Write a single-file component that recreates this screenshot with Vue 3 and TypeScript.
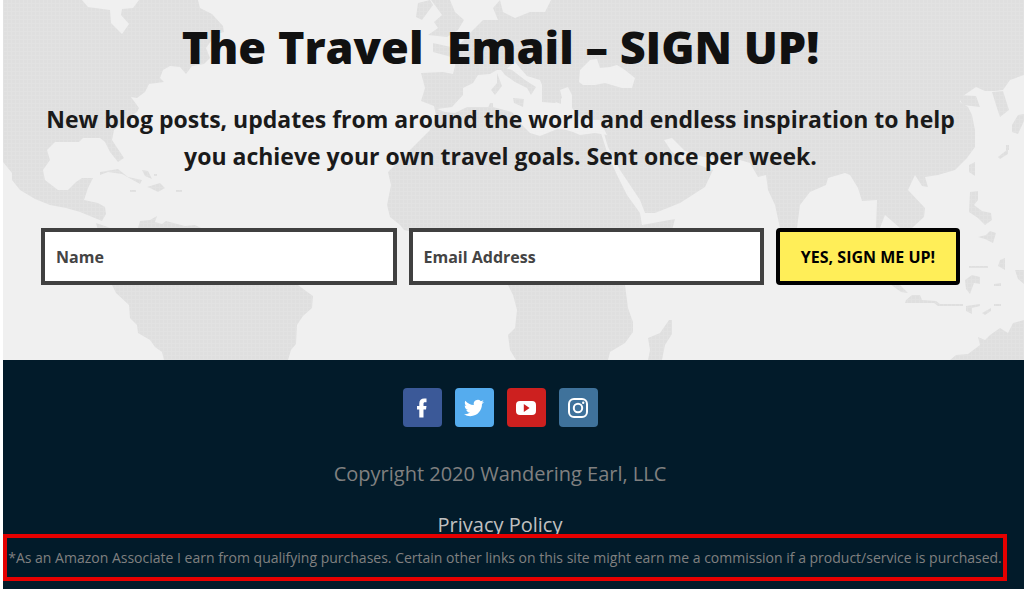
<script setup lang="ts">
import { ref } from 'vue'

const name = ref('')
const email = ref('')

const land: string[] = [
  // North and Central America
  'M3 0H82L88 7L110 10L111 23L122 34L129 24L121 15L122 9L133 8L139 0H198L200 8L212 14L223 26L224 32L216 34L206 48L210 58L204 64L192 66L186 74L180 67L170 66L163 70L160 78L164 82L149 84L145 92L137 98L131 97L139 108L137 112L125 120L114 130L112 140L120 152L124 158L118 162L110 152L105 142L100 138H83L79 142H55L47 150L50 160L43 170L45 180L58 190H68L76 182L82 178H93L88 188L84 200L98 203L105 207L106 214L102 221L80 212L66 208L50 205L35 199L20 190L12 180V173L3 162Z',
  // Caribbean
  'M100 172L118 169L128 177L142 180L140 184L122 174L108 172L100 175ZM147 187L160 183L165 188L158 192L150 188ZM130 190H136V192H130ZM176 190H182V192H176ZM142 170L148 171L152 179L145 176ZM154 174H157V176H154Z',
  // South America
  'M96 223L105 226L115 230L138 228L140 221L150 220L157 216L155 222L162 224L166 221L185 226L195 225L203 229L240 250L298 285L306 291L313 296L312 308L303 316L297 325L296 344L291 350L288 360H164L162 352L155 347L150 340L138 333L137 325L130 318L129 305L116 293L112 285Z',
  // British Isles
  'M418 3L430 0L433 5L422 20L416 17ZM431 0H450L455 12L464 20L458 30L447 37L428 35L438 28L434 22L442 15L437 8Z',
  // Europe and Asia
  'M470 33L483 20H498L493 8L500 0L503 12L515 18L530 12H545L551 0H1024V75L1010 80L1003 90L995 91H985L976 87L960 98V102L968 107L972 115L975 130V147L967 158L955 170L938 175L925 177L928 187L922 186L915 175L908 190L925 208L924 217L912 228H900L885 215L880 228H876L877 200L862 201L858 188L850 175L845 173L828 178L826 185L810 192L800 205L797 228H780L775 205L768 190L766 175L758 177L750 163L740 160L720 160L700 156L685 151L672 138L664 140L672 152L685 160L713 170L705 187L680 203L655 213H645L640 200L630 185L620 170L608 147L600 120H437L434 106L421 101L425 88L421 73L443 72L453 74L455 66V58L433 52V43L451 47L460 44Z',
  // Africa
  'M437 113L467 107L493 107L512 112L540 128L575 130L600 130L608 155L617 175L627 195L640 213L642 225L675 219L672 230L640 270L625 285L628 308L633 322V332L625 343L610 352L608 360H516L510 350L508 335L515 328L517 310L513 295L508 285L470 245L404 230L400 225L390 217L387 205L391 185L388 172L400 160L415 145L430 130Z',
  // Madagascar
  'M669 320H672V334L665 345L662 360H648L650 350L648 338L660 333Z',
  // East Asian islands
  'M992 92L1003 91L1009 110L1000 117L996 105ZM1012 125L1018 115L1024 114V121L1018 134L1012 132ZM969 165L975 162V176L969 172ZM998 157L1008 149V154L1000 159ZM1006 145H1009V150H1006ZM957 95L976 96L980 107L963 105Z',
  'M970 192L978 191V200L974 205L982 211L991 213L992 220L985 225L978 218L969 212ZM978 237L986 235L990 231L996 233L993 243L985 239ZM1000 260L1005 258V270L998 266ZM969 266H988V268H969ZM965 280L972 275L980 277V284L974 283L970 294L966 289ZM994 284L1001 283V286H994ZM1015 270H1024V284L1018 279Z',
  'M884 275L900 285L908 293L901 292L890 284ZM906 300L912 295H920L922 300L936 301L940 304H963V306H938L934 303L905 303ZM966 306L980 304V306L972 308V314L966 311ZM982 313L991 308V311L985 315ZM994 304H1001V306H994Z',
  // Australia
  'M950 360L956 355L968 354L980 345L978 337L985 340L990 335L1000 328L1008 333L1013 323L1024 320V360Z',
]

const water: string[] = [
  'M437 109L452 107L463 95V88L473 83L478 75L490 74L497 70L505 70L515 62L520 68L527 76L540 80L542 85V102L555 103L562 98L560 90L568 87L572 95V108L580 118L600 121L607 135L595 133L580 135L573 132L560 128L540 136L530 133L522 125L512 112L493 107L467 107L455 113L445 112Z',
  'M579 82L580 70L590 60L597 59L600 68L610 67L617 65L625 70L635 78L632 88L622 88L605 83L595 85L583 85Z',
]

const mediterranean: string[] = [
  'M498 66L512 70L525 80L536 87L531 95L527 88L515 82L505 75ZM497 73L502 86L495 95L491 90L497 83ZM513 98L524 99L523 107L514 103ZM552 98L561 96V104L553 101ZM490 103H493V108H488Z',
]
</script>

<template>
  <div class="page">
    <section class="signup">
      <svg class="map" viewBox="3 0 1021 360" preserveAspectRatio="xMidYMid slice" aria-hidden="true">
        <defs>
          <pattern id="dots" width="4" height="4" patternUnits="userSpaceOnUse">
            <rect width="4" height="4" fill="#e2e2e2" />
            <rect width="3" height="3" fill="#dfdfdf" />
          </pattern>
        </defs>
        <path v-for="d in land" :key="d" :d="d" fill="url(#dots)" />
        <path v-for="d in water" :key="d" :d="d" fill="#f0f0f0" />
        <path v-for="d in mediterranean" :key="d" :d="d" fill="url(#dots)" />
      </svg>
      <div class="content">
        <h1>The Travel&nbsp; Email – SIGN UP!</h1>
        <p class="lead">
          New blog posts, updates from around the world and endless inspiration to help you achieve
          your own travel goals. Sent once per week.
        </p>
        <form class="form" @submit.prevent>
          <input v-model="name" type="text" placeholder="Name" aria-label="Name" />
          <input v-model="email" type="email" placeholder="Email Address" aria-label="Email Address" />
          <button type="submit">YES, SIGN ME UP!</button>
        </form>
      </div>
    </section>

    <footer class="footer">
      <div class="center">
        <nav class="social" aria-label="Social media">
          <a class="facebook" href="#" aria-label="Facebook">
            <svg viewBox="0 0 20 20"><path fill="#fff" d="M7.300 19.500V11.500H5V8H7.300V5.500C7.300 2.300 9.200.500 12.200.500H14.500V4.200H13C11.900 4.200 11.500 4.800 11.500 5.800V8H14.500L14 11.500H11.500V19.500Z" /></svg>
          </a>
          <a class="twitter" href="#" aria-label="Twitter">
            <svg viewBox="0 0 24 24"><path fill="#fff" d="M23.950 4.570a10 10 0 0 1-2.820.77 4.960 4.960 0 0 0 2.160-2.720c-.95.550-2 .950-3.130 1.180a4.920 4.920 0 0 0-8.380 4.480C7.690 8.100 4.070 6.130 1.640 3.160a4.820 4.820 0 0 0-.67 2.480c0 1.710.87 3.210 2.190 4.100a4.900 4.900 0 0 1-2.230-.62v.06a4.920 4.920 0 0 0 3.950 4.830 5 5 0 0 1-2.210.08 4.940 4.940 0 0 0 4.600 3.420A9.870 9.870 0 0 1 0 19.540a14 14 0 0 0 7.550 2.210c9.050 0 14-7.500 14-13.980 0-.21 0-.42-.02-.63a9.940 9.940 0 0 0 2.460-2.550z" /></svg>
          </a>
          <a class="youtube" href="#" aria-label="YouTube">
            <svg viewBox="0 0 20 20"><path fill="#fff" fill-rule="evenodd" d="M4 3H16Q20 3 20 7V13Q20 17 16 17H4Q0 17 0 13V7Q0 3 4 3ZM7.800 6V14L13.600 10Z" /></svg>
          </a>
          <a class="instagram" href="#" aria-label="Instagram">
            <svg viewBox="0 0 20 20" fill="none" stroke="#fff" stroke-width="2"><rect x="1" y="1" width="18" height="18" rx="5" /><circle cx="10" cy="10" r="4.200" /><circle cx="15.200" cy="4.800" r="1.200" fill="#fff" stroke="none" /></svg>
          </a>
        </nav>
        <p class="copyright">Copyright 2020 Wandering Earl, LLC</p>
        <a class="privacy" href="#">Privacy Policy</a>
      </div>
      <p class="disclosure">
        *As an Amazon Associate I earn from qualifying purchases. Certain other links on this site
        might earn me a commission if a product/service is purchased.
      </p>
    </footer>
  </div>
</template>

<style>
body {
  margin: 0;
  background: #fff;
}
</style>

<style scoped>
.page {
  display: flex;
  flex-direction: column;
  min-height: 100vh;
  margin-left: 3px;
  box-sizing: border-box;
  font-family: "Open Sans", "Noto Sans", sans-serif;
}

.signup {
  position: relative;
  background: #f0f0f0;
}

.map {
  position: absolute;
  inset: 0;
  width: 100%;
  height: 100%;
}

.content {
  position: relative;
  padding: 17px 64px 75px 38px;
  text-align: center;
}

h1 {
  margin: 0;
  font-size: 45px;
  font-weight: 800;
  line-height: 60px;
  color: #111;
}

.lead {
  margin: 24px 0 53px;
  font-size: 23px;
  font-weight: 700;
  line-height: 37px;
  color: #1a1a1a;
}

.form {
  display: flex;
  gap: 12px;
}

.form input,
.form button {
  box-sizing: border-box;
  height: 57px;
  font-family: inherit;
  font-size: 16px;
  font-weight: 700;
}

.form input {
  flex: 1;
  min-width: 0;
  padding: 0 11px;
  border: 4px solid #404040;
  border-radius: 0;
  background: #fff;
  color: #404040;
}

.form input::placeholder {
  color: #444;
  opacity: 1;
}

.form button {
  flex: none;
  width: 184px;
  padding: 0;
  border: 4px solid #000;
  border-radius: 4px;
  background: #ffee58;
  color: #000;
  white-space: nowrap;
}

.footer {
  flex: 1;
  background: #021b2a;
}

.center {
  display: flex;
  flex-direction: column;
  align-items: center;
  padding: 28px 27px 0 0;
}

.social {
  display: flex;
  gap: 13px;
}

.social a {
  display: flex;
  align-items: center;
  justify-content: center;
  width: 39px;
  height: 39px;
  border-radius: 4px;
}

.social svg {
  width: 20px;
  height: 20px;
}

.facebook {
  background: #3b5998;
}

.twitter {
  background: #55acee;
}

.youtube {
  background: #cd201f;
}

.instagram {
  background: #3f729b;
}

.copyright {
  margin: 32px 0 21px;
  font-size: 20px;
  line-height: 30px;
  color: #808080;
}

.privacy {
  font-size: 20px;
  line-height: 30px;
  color: #c0c0c0;
  text-decoration: none;
}

.disclosure {
  position: relative;
  margin: -6px 17px 0 0;
  padding: 9px 0;
  border: 4px solid #e60000;
  font-size: 14px;
  line-height: 21px;
  color: #808080;
  background: #021b2a;
  text-align: center;
}
</style>
